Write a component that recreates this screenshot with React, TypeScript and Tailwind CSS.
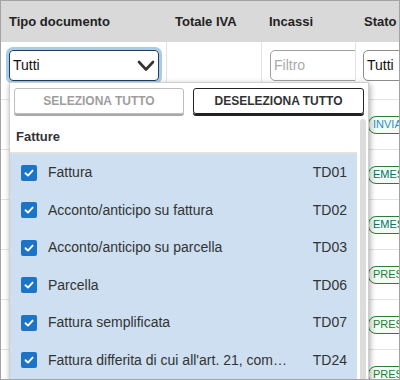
import React from 'react'

const voci = [
    { label: 'Fattura', code: 'TD01' },
    { label: 'Acconto/anticipo su fattura', code: 'TD02' },
    { label: 'Acconto/anticipo su parcella', code: 'TD03' },
    { label: 'Parcella', code: 'TD06' },
    { label: 'Fattura semplificata', code: 'TD07' },
    { label: "Fattura differita di cui all'art. 21, comma 4, lett. a)", code: 'TD24' },
]

const righe = [
    { stato: 'INVIA', color: 'text-[#2a8fc4]' },
    { stato: 'EMES', color: 'text-[#0f6e68]' },
    { stato: 'EMES', color: 'text-[#0f6e68]' },
    { stato: 'PRES', color: 'text-[#23803a]' },
    { stato: 'PRES', color: 'text-[#23803a]' },
    { stato: 'PRES', color: 'text-[#23803a]' },
]

function Chevron() {
    return (
        <svg width="18" height="12" viewBox="0 0 18 12" className="shrink-0">
            <polyline points="2,2 9,9.5 16,2" fill="none" stroke="#333" strokeWidth="2.6" strokeLinecap="round" strokeLinejoin="round" />
        </svg>
    )
}

function Check() {
    return (
        <div className="w-4 h-4 rounded-[2px] bg-[#1b74c8] flex items-center justify-center shrink-0">
            <svg width="12" height="12" viewBox="0 0 12 12">
                <polyline points="2.5,6.2 5,8.6 9.6,3.6" fill="none" stroke="#fff" strokeWidth="1.9" strokeLinecap="round" strokeLinejoin="round" />
            </svg>
        </div>
    )
}

export default function App() {
    return (
        <div className="relative w-[400px] h-[380px] overflow-hidden bg-white border border-[#a3a3a3] text-[#222]" style={{ fontFamily: '"Liberation Sans", Arial, sans-serif' }}>
            {/* intestazione */}
            <div className="flex h-[41px] bg-[#d9d9d9] text-[13px] font-bold text-[#222] items-center">
                <div className="w-[166px] pl-2 shrink-0">Tipo documento</div>
                <div className="w-[95px] pl-2 shrink-0">Totale IVA</div>
                <div className="w-[94px] pl-[7px] shrink-0">Incassi</div>
                <div className="flex-1 pl-2">Stato</div>
            </div>

            {/* filtri */}
            <div className="flex h-[58px] border-b border-[#e3e3e3]">
                <div className="w-[166px] shrink-0 border-r border-[#e3e3e3] pl-2 pt-2">
                    <div className="w-[150px] h-[31px] rounded-[4px] border border-[#1d3f63] ring-[3px] ring-[#a9cbe8] flex items-center justify-between pl-[3px] pr-[3px] text-[14px] text-[#111]">
                        <span>Tutti</span>
                        <Chevron />
                    </div>
                </div>
                <div className="w-[95px] shrink-0 border-r border-[#e3e3e3]" />
                <div className="w-[94px] shrink-0 border-r border-[#e3e3e3] pl-2 pt-2 overflow-hidden">
                    <div className="w-[110px] h-[31px] rounded-[5px] border border-[#a0a0a0] flex items-center pl-[3px] text-[14px] text-[#aaa]">Filtro</div>
                </div>
                <div className="flex-1 pl-[7px] pt-2 overflow-hidden">
                    <div className="w-[60px] h-[31px] rounded-[5px] border border-[#8c8c8c] flex items-center pl-[3px] text-[14px] text-[#111]">Tutti</div>
                </div>
            </div>

            {/* righe */}
            {righe.map((r, i) => (
                <div key={i} className="flex h-[50px] border-b border-[#e3e3e3]">
                    <div className="w-[355px] shrink-0" />
                    <div className="flex-1 pl-3 flex items-center overflow-hidden">
                        <span className={`h-[18px] pl-1 pr-4 flex items-center rounded-l-[8px] border border-[#2e7d32] bg-[#f4faf4] text-[11px] ${r.color}`}>{r.stato}</span>
                    </div>
                </div>
            ))}

            {/* menu a tendina */}
            <div className="absolute left-[8px] top-[81px] w-[360px] h-[320px] bg-white border border-[#cfcfcf] shadow-[1px_2px_6px_rgba(0,0,0,0.35)] flex flex-col">
                <div className="flex gap-[9px] pl-[4px] pt-[5px] h-[31px] shrink-0">
                    <button className="w-[170px] h-[26px] rounded-[3px] border border-[#bdbdbd] shadow-[0_2px_0_#a8a8a8] text-[12px] font-bold text-[#9e9e9e] uppercase">Seleziona tutto</button>
                    <button className="w-[171px] h-[26px] rounded-[3px] border border-[#222] shadow-[0_2px_0_#222] text-[12px] font-bold text-[#333] uppercase">Deseleziona tutto</button>
                </div>
                <div className="flex flex-1 min-h-0">
                    <div className="w-[347px] shrink-0 flex flex-col">
                        <div className="h-[40px] shrink-0 flex items-end pb-[6px] pl-[6px] text-[13px] font-bold text-[#333] border-b-2 border-[#e2e2e2]">Fatture</div>
                        <div className="flex-1 bg-[#cddff0]">
                            {voci.map(v => (
                                <div key={v.code} className="h-[37.5px] flex items-center pl-[11px] pr-[10px] text-[14px] text-[#333]">
                                    <Check />
                                    <span className="ml-[11px] w-[240px] truncate">{v.label}</span>
                                    <span className="ml-auto">{v.code}</span>
                                </div>
                            ))}
                        </div>
                    </div>
                    <div className="flex-1 pt-[5px] pl-[3px]">
                        <div className="w-[6px] h-full rounded-full bg-[#dcdcdc]" />
                    </div>
                </div>
            </div>
        </div>
    )
}
